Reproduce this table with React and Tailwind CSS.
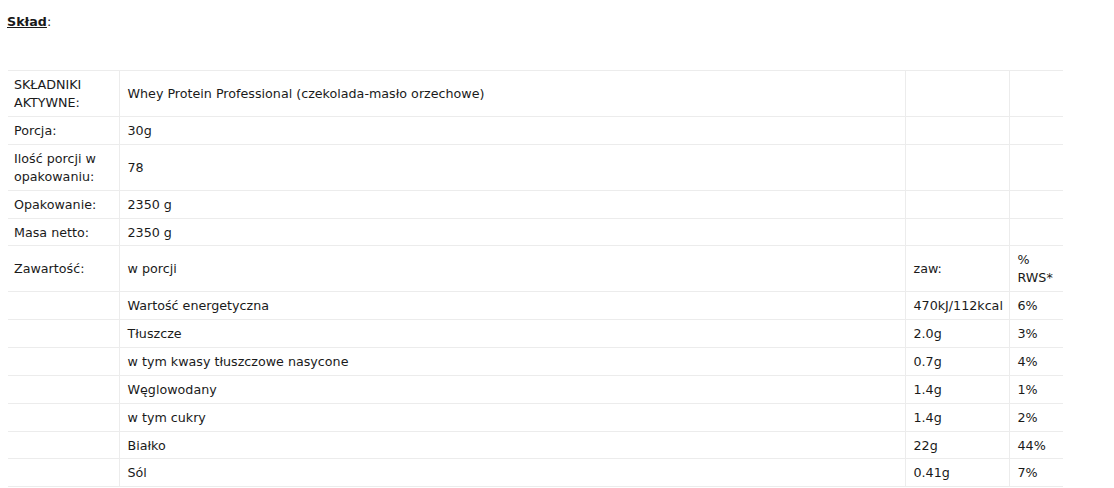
export default function App() {
  const rows = [
    ["SKŁADNIKI\nAKTYWNE:", "Whey Protein Professional (czekolada-masło orzechowe)", "", ""],
    ["Porcja:", "30g", "", ""],
    ["Ilość porcji w\nopakowaniu:", "78", "", ""],
    ["Opakowanie:", "2350 g", "", ""],
    ["Masa netto:", "2350 g", "", "", true],
    ["Zawartość:", "w porcji", "zaw:", "%\nRWS*"],
    ["", "Wartość energetyczna", "470kJ/112kcal", "6%"],
    ["", "Tłuszcze", "2.0g", "3%"],
    ["", "w tym kwasy tłuszczowe nasycone", "0.7g", "4%"],
    ["", "Węglowodany", "1.4g", "1%"],
    ["", "w tym cukry", "1.4g", "2%"],
    ["", "Białko", "22g", "44%", true],
    ["", "Sól", "0.41g", "7%"],
  ];
  return (
    <div className="bg-white w-[1114px] h-[488px] overflow-hidden text-[#1a1a1a] text-[12.7px] leading-[18px]" style={{ fontFamily: '"DejaVu Sans", Verdana, sans-serif' }}>
      <div className="pl-[7px] pt-[13px] h-[70px]">
        <span className="font-bold underline">Skład</span>:
      </div>
      <table className="ml-[8px] w-[1055px] border-collapse table-fixed">
        <colgroup>
          <col className="w-[111px]" />
          <col className="w-[786px]" />
          <col className="w-[104px]" />
          <col className="w-[54px]" />
        </colgroup>
        <tbody>
          {rows.map((r, i) => (
            <tr key={i} className="border-t border-b border-[#ececec]">
              {r.slice(0, 4).map((c, j) => (
                <td
                  key={j}
                  className={
                    "align-middle pt-[5px] whitespace-pre-line " +
                    (r[4] ? "pb-[3px] " : "pb-[4px] ") +
                    (j === 0 ? "pl-[6px] pr-[2px] " : "px-[8px] border-l border-[#ececec] ")
                  }
                >
                  {c}
                </td>
              ))}
            </tr>
          ))}
        </tbody>
      </table>
    </div>
  );
}
